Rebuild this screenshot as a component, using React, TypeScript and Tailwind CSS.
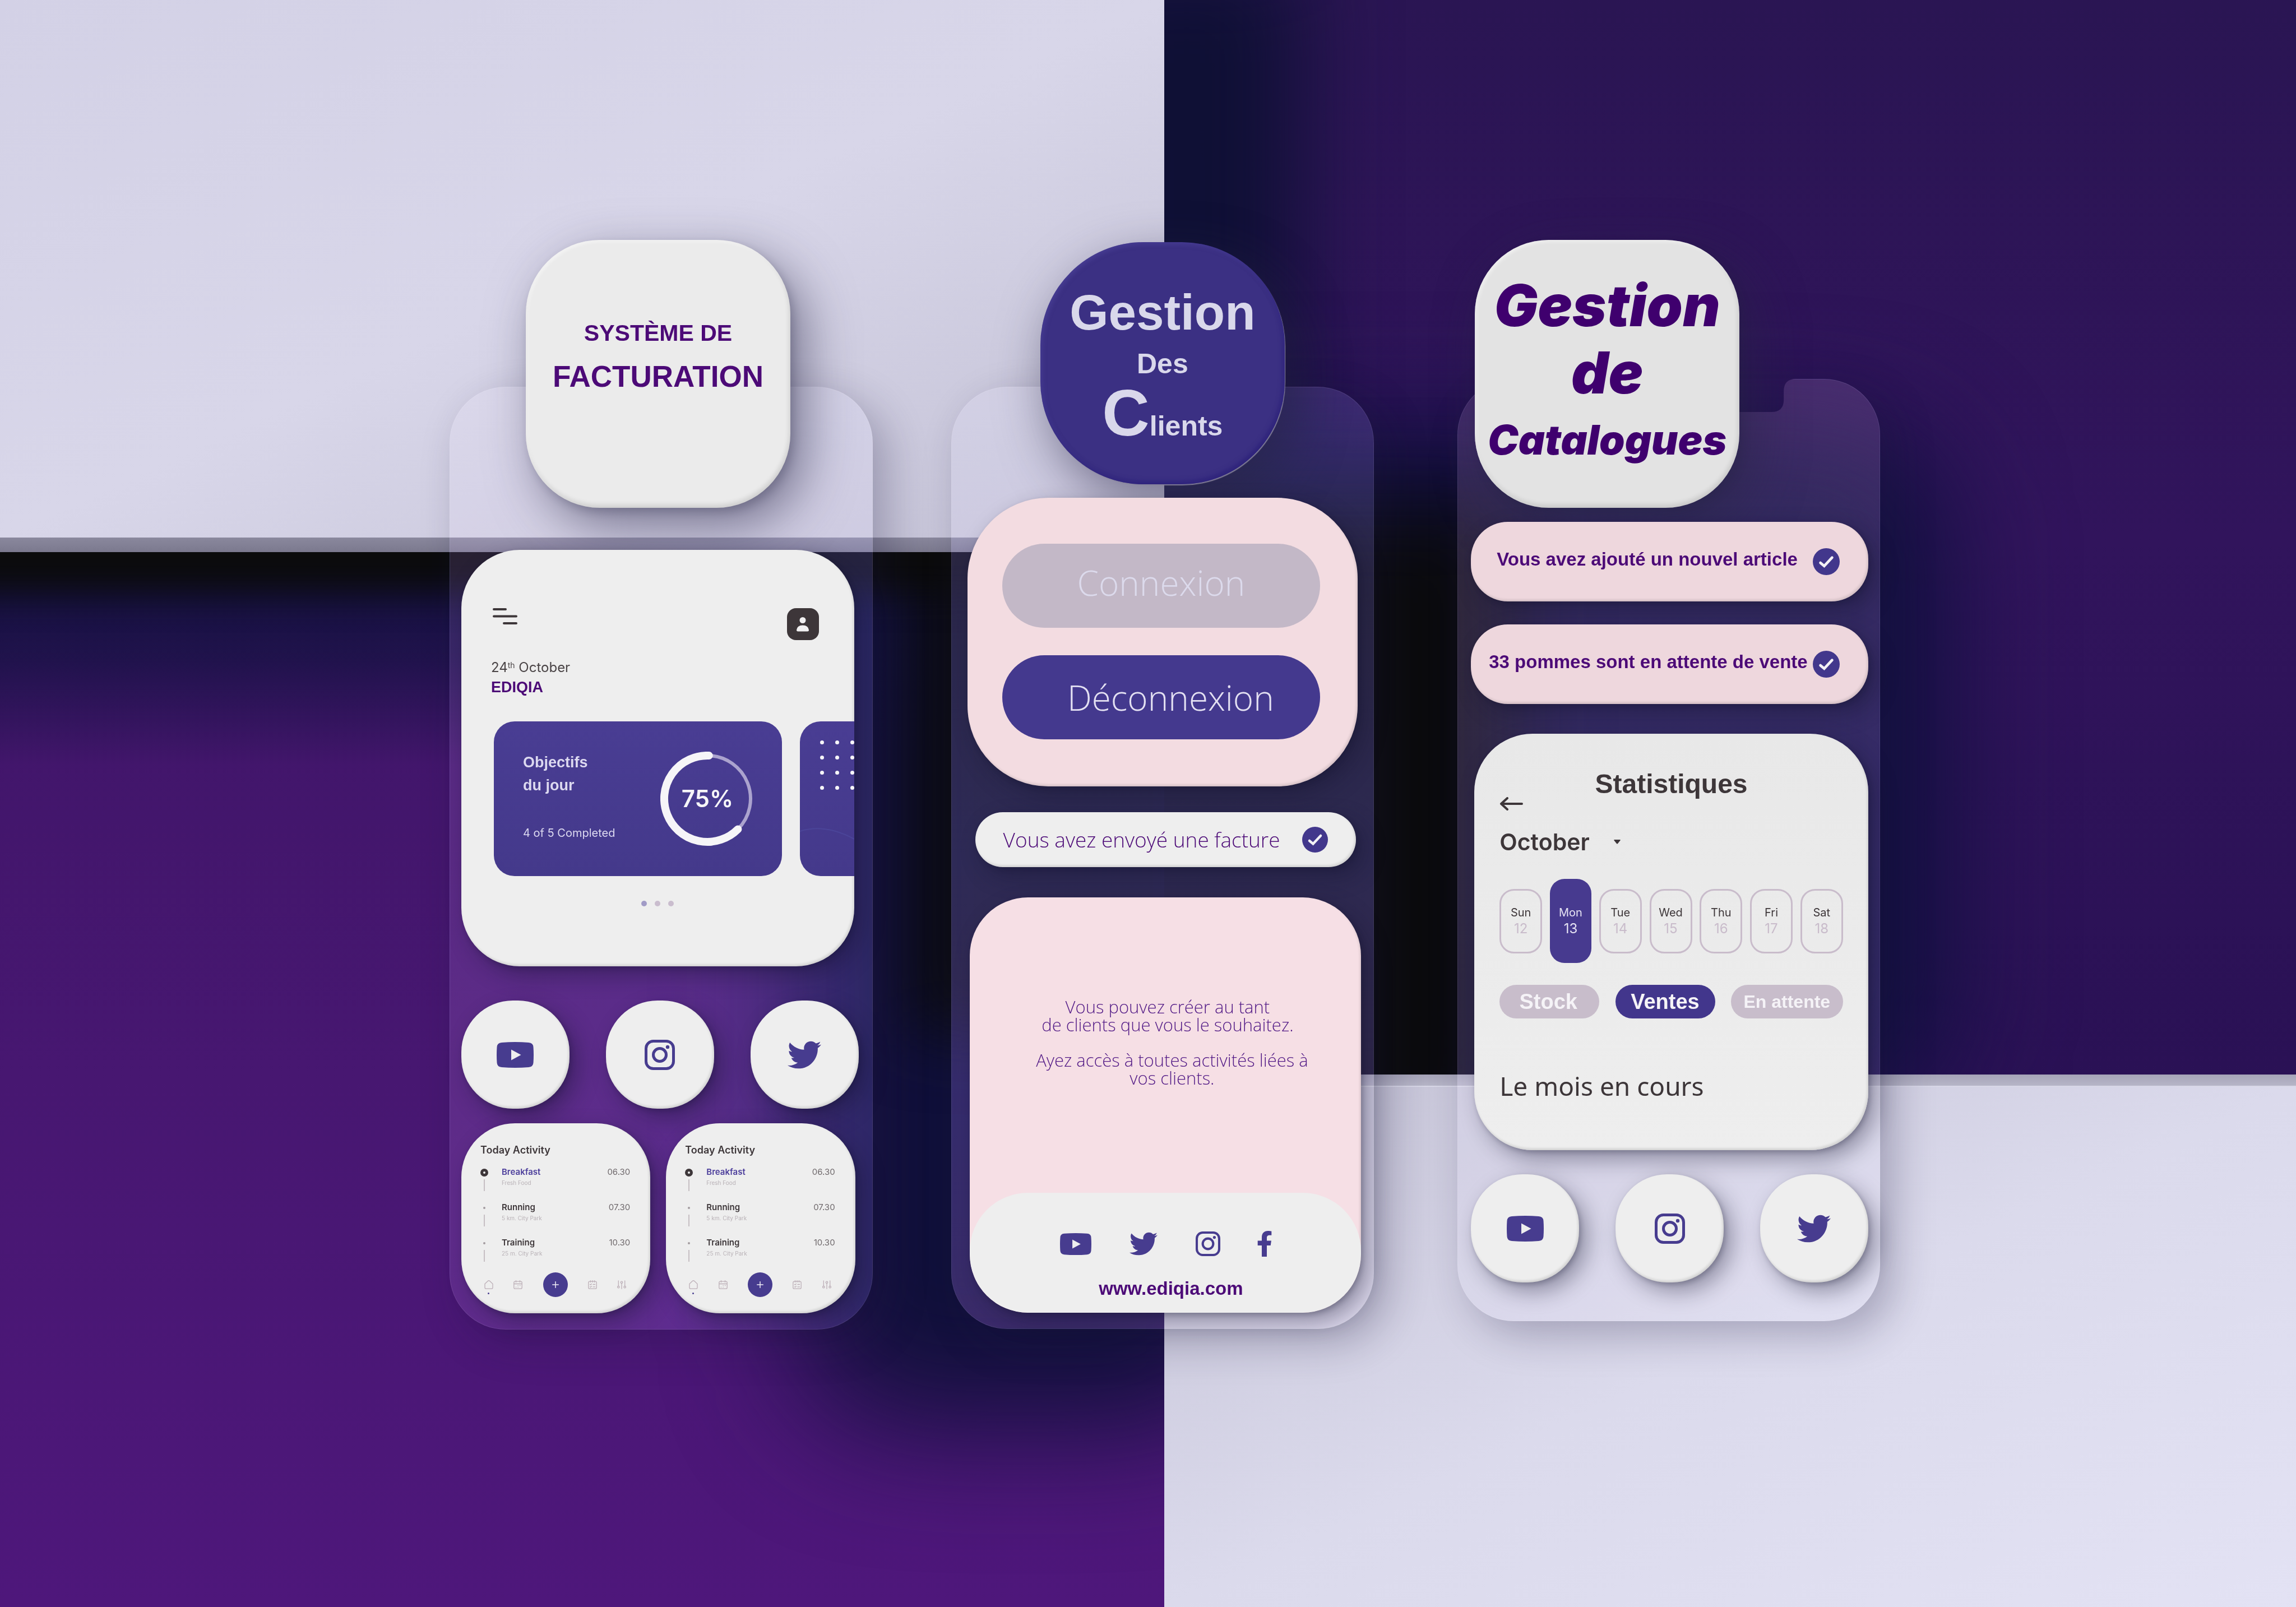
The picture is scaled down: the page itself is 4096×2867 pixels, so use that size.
import React from "react";
import { FaTwitter, FaFacebookF } from "react-icons/fa";

/* ---------- icons ---------- */

function YoutubeIcon({ className }: { className: string }) {
  return (
    <svg viewBox="0 0 66 46" className={className} fill="currentColor" aria-hidden="true">
      <path
        fillRule="evenodd"
        d="M9 1Q33-1 57 1Q65 1.500 65.500 9Q66.500 23 65.500 37Q65 44.500 57 45Q33 47 9 45Q1 44.500.5 37Q-.5 23 .5 9Q1 1.500 9 1ZM26 13.500V32.500L43.500 23Z"
      />
    </svg>
  );
}

function InstagramIcon({ className }: { className: string }) {
  return (
    <svg viewBox="0 0 54 54" className={className} fill="none" stroke="currentColor" strokeWidth="5" aria-hidden="true">
      <rect x="2.500" y="2.500" width="49" height="49" rx="13" />
      <circle cx="27" cy="27" r="11.500" />
      <circle cx="41" cy="13" r="3.200" fill="currentColor" stroke="none" />
    </svg>
  );
}

function CheckBadge({ className }: { className: string }) {
  return (
    <svg viewBox="0 0 46 46" className={className} aria-hidden="true">
      <circle cx="23" cy="23" r="23" fill="#42378c" />
      <path d="M13 25L19.500 30.500L33 16" fill="none" stroke="#f3f1f6" strokeWidth="4.500" strokeLinecap="round" />
    </svg>
  );
}

function NavIcon({ children }: { children: React.ReactNode }) {
  return (
    <svg
      viewBox="0 0 16 16"
      className="size-4"
      fill="none"
      stroke="#bdb0b8"
      strokeWidth="1.300"
      strokeLinecap="round"
      strokeLinejoin="round"
      aria-hidden="true"
    >
      {children}
    </svg>
  );
}

/* ---------- shared pieces ---------- */

const tileShadow =
  "shadow-[24px_32px_90px_rgba(40,38,70,0.55),6px_8px_16px_rgba(30,28,60,0.2),inset_-2px_-5px_8px_rgba(0,0,0,0.12),inset_3px_3px_6px_rgba(255,255,255,0.5)]";
const cardShadow =
  "shadow-[14px_16px_38px_rgba(18,18,45,0.38),3px_4px_8px_rgba(18,18,45,0.22),inset_-2px_-3px_4px_rgba(0,0,0,0.12)]";
const panel =
  "relative min-w-0 flex-1 self-start rounded-[100px] shadow-[24px_24px_72px_rgba(30,26,60,0.28)]";
const glass = "absolute inset-0 -z-10 rounded-[100px] border border-[#55506a]/40 mix-blend-screen";

function SocialLinks() {
  const item =
    "flex size-[193px] items-center justify-center rounded-[92px] bg-[#eeeeee] text-[#473c8f] " + cardShadow;
  return (
    <nav className="flex justify-between" aria-label="Réseaux sociaux">
      <a href="#youtube" aria-label="YouTube" className={item}>
        <YoutubeIcon className="h-[46px] w-[66px]" />
      </a>
      <a href="#instagram" aria-label="Instagram" className={item}>
        <InstagramIcon className="size-[54px]" />
      </a>
      <a href="#twitter" aria-label="Twitter" className={item}>
        <FaTwitter className="size-[60px]" />
      </a>
    </nav>
  );
}

const activities = [
  { name: "Breakfast", place: "Fresh Food", time: "06.30", current: true },
  { name: "Running", place: "5 km. City Park", time: "07.30", current: false },
  { name: "Training", place: "25 m. City Park", time: "10.30", current: false },
];

function ActivityCard() {
  return (
    <article
      className={"min-h-[339px] min-w-0 flex-1 rounded-[96px] bg-[#eeeeee] pt-9 pr-9 pl-[34px] font-[Inter,sans-serif] " + cardShadow}
    >
      <h3 className="text-[18px] leading-6 font-semibold text-[#3d3639]">Today Activity</h3>
      <ul className="mt-[17px]">
        {activities.map((a) => (
          <li key={a.name} className="flex h-[63px]">
            <div className="mt-1 mr-6 flex w-3.5 flex-col items-center">
              <span className="flex h-3.5 items-center">
                {a.current ? (
                  <span className="size-3.5 rounded-full border-[5px] border-[#3d3639]" />
                ) : (
                  <span className="size-1 rounded-full bg-[#a39ca0]" />
                )}
              </span>
              <span className="mt-[5px] h-[21px] w-0.5 bg-[#c6bfc3]" />
            </div>
            <div className="flex-1">
              <p
                className={
                  a.current
                    ? "text-[15px] leading-5 font-semibold text-[#4b3d9b]"
                    : "text-[15px] leading-5 font-semibold text-[#3d3639]"
                }
              >
                {a.name}
              </p>
              <p className="mt-0.5 text-[10px] leading-[14px] text-[#b9b2b7]">{a.place}</p>
            </div>
            <time className="text-[15px] leading-5 text-[#6f696c]">{a.time}</time>
          </li>
        ))}
      </ul>
      <nav className="mx-[7px] flex items-center justify-between" aria-label="Activité">
        <button type="button" aria-label="Accueil" className="relative">
          <NavIcon>
            <path d="M1 6.500L6.500 1.300Q8 .2 9.500 1.300L15 6.500V13Q15 15.200 12.800 15.200H3.200Q1 15.200 1 13Z" />
          </NavIcon>
          <span className="absolute top-[22px] left-1.5 size-[3px] rounded-full bg-[#473c8f]" />
        </button>
        <button type="button" aria-label="Calendrier">
          <NavIcon>
            <path d="M3 2.200H13Q15.200 2.200 15.200 4.400V13Q15.200 15.200 13 15.200H3Q.8 15.200 .8 13V4.400Q.8 2.200 3 2.200ZM.8 6.500H15.200M4.500 .7V3.500M11.500 .7V3.500M11.500 9.500H12M8 9.500H8.300M8 12.300H8.300M4.300 12.300H4.600" />
          </NavIcon>
        </button>
        <button
          type="button"
          aria-label="Ajouter"
          className="flex size-11 items-center justify-center rounded-full bg-[#473c8f]"
        >
          <svg viewBox="0 0 12 12" className="size-3" stroke="#efedf6" strokeWidth="1.500" strokeLinecap="round" aria-hidden="true">
            <path d="M6 .7V11.300M.7 6H11.300" />
          </svg>
        </button>
        <button type="button" aria-label="Tâches">
          <NavIcon>
            <path d="M3 2.200H13Q15.200 2.200 15.200 4.400V13Q15.200 15.200 13 15.200H3Q.8 15.200 .8 13V4.400Q.8 2.200 3 2.200ZM4.500 .7V3.500M8 .7V3.500M11.500 .7V3.500M3.500 7.500L4.500 8.300L6.300 6.500M9 7.500H12.500M3.500 11.800L4.500 12.600L6.300 10.800M9 11.800H12.500" />
          </NavIcon>
        </button>
        <button type="button" aria-label="Réglages">
          <NavIcon>
            <path d="M2.300 1V10M13.700 1V10M8 15.200V6" />
            <circle cx="2.300" cy="12.200" r="1.700" />
            <circle cx="13.700" cy="12.200" r="1.700" />
            <circle cx="8" cy="3.800" r="1.700" />
          </NavIcon>
        </button>
      </nav>
    </article>
  );
}

function ProgressRing() {
  return (
    <div className="relative size-[168px]">
      <svg viewBox="0 0 168 168" className="size-full" fill="none" strokeLinecap="round" aria-hidden="true">
        <path d="M86.700 7A77 77 0 0 1 138.400 138.400" stroke="#aba3ce" strokeWidth="6" />
        <path d="M138.400 138.400A77 77 0 1 1 86.700 7" stroke="#f6f5f8" strokeWidth="14" />
      </svg>
      <span className="absolute inset-0 flex items-center justify-center font-[Inter,sans-serif] text-[42px] leading-none font-semibold text-[#f6f5f8]">
        75%
      </span>
    </div>
  );
}

/* ---------- columns ---------- */

function BillingColumn() {
  return (
    <section className={"mt-[262px] mr-[140px] pr-[25px] pb-[29px] pl-[21px] " + panel}>
      <div className={"bg-linear-to-r from-[#1e1628] to-[#1b1936] " + glass} />
      <header
        className={
          "-mt-[262px] ml-[115px] flex min-h-[478px] w-[472px] flex-col items-center rounded-[132px] bg-[#ebebeb] pt-[136px] font-['Liberation_Sans',sans-serif] font-bold text-[#4c0a77] " +
          tileShadow
        }
      >
        <h2 className="text-center">
          <span className="block text-[41px] leading-[60px]">SYSTÈME DE</span>
          <span className="mt-2 block text-[53px] leading-[80px]">FACTURATION</span>
        </h2>
      </header>

      <article className={"mt-[75px] mr-2 min-h-[743px] overflow-hidden rounded-[104px] bg-[#eeeeee] pt-[104px] " + cardShadow}>
        <div className="flex justify-between pr-[63px] pl-14">
          <button type="button" aria-label="Menu" className="self-start">
            <svg viewBox="0 0 44 29" className="h-[29px] w-11" stroke="#3d3639" strokeWidth="4" strokeLinecap="round" aria-hidden="true">
              <path d="M2 2H23M2 14.500H42M20 27H42" />
            </svg>
          </button>
          <button
            type="button"
            aria-label="Profil"
            className="flex size-[57px] items-center justify-center rounded-[16px] bg-[#3d3639]"
          >
            <svg viewBox="0 0 22 26" className="h-[26px] w-[22px]" fill="#f1f0f1" aria-hidden="true">
              <circle cx="11" cy="5.500" r="5.500" />
              <path d="M0 23Q1 14.500 11 14.500T22 23Q22 25.500 19.500 25.500H2.500Q0 25.500 0 23Z" />
            </svg>
          </button>
        </div>
        <p className="mt-[35px] pl-[53px] font-[Inter,sans-serif] text-[24px] leading-7 text-[#4a4446]">
          24<sup className="text-[14px]">th</sup> October
        </p>
        <p className="mt-[3px] pl-[53px] font-['Liberation_Sans',sans-serif] text-[27px] leading-9 font-bold text-[#4c0a77]">EDIQIA</p>

        <div className="mt-[43px] flex gap-8 pl-[58px]">
          <div className="flex min-h-[276px] w-[514px] shrink-0 items-center justify-between rounded-[37px] bg-linear-to-b from-[#493d93] to-[#44398b] pr-[49px] pl-[52px]">
            <div className="self-start pt-[53px]">
              <p className="font-['Liberation_Sans',sans-serif] text-[27px] leading-[41px] font-bold text-[#dcd9f0]">
                Objectifs
                <br />
                du jour
              </p>
              <p className="mt-[50px] font-[Inter,sans-serif] text-[20px] leading-7 text-[#dcd9f0]">4 of 5 Completed</p>
            </div>
            <ProgressRing />
          </div>
          <div className="relative min-h-[276px] min-w-0 flex-1 overflow-hidden rounded-l-[37px] bg-linear-to-b from-[#493d93] to-[#44398b] pt-[34px] pl-9">
            <div className="grid w-[61px] grid-cols-[repeat(3,7px)] gap-5">
              {Array.from({ length: 12 }, (_, i) => (
                <span key={i} className="size-[7px] rounded-full bg-[#f6f5f8]" />
              ))}
            </div>
            <svg viewBox="0 0 97 86" className="absolute bottom-0 left-0 h-[86px] w-[97px]" aria-hidden="true">
              <path d="M0 6Q45-8 97 20" fill="none" stroke="#4b4599" strokeWidth="2" />
            </svg>
          </div>
        </div>

        <div className="mt-11 flex justify-center gap-3.5">
          <button type="button" aria-label="Page 1" className="size-2.5 rounded-full bg-[#a19bc6]" />
          <button type="button" aria-label="Page 2" className="size-2.5 rounded-full bg-[#cabdce]" />
          <button type="button" aria-label="Page 3" className="size-2.5 rounded-full bg-[#cabdce]" />
        </div>
      </article>

      <div className="mt-[61px]">
        <SocialLinks />
      </div>

      <div className="mt-[26px] mr-1.5 flex gap-7">
        <ActivityCard />
        <ActivityCard />
      </div>
    </section>
  );
}

function ClientsColumn() {
  return (
    <section className={"mt-[262px] mr-[149px] px-[23px] pb-[29px] " + panel}>
      <div className={"bg-linear-to-b from-[#1d1a30] via-[#241f48] to-[#2c1d3c] " + glass} />
      <header className="mx-auto -mt-[258px] flex min-h-[432px] w-[436px] flex-col items-center rounded-[184px] bg-[#3b3083] pt-[77px] font-['Liberation_Sans',sans-serif] font-bold text-[#d9d8eb] shadow-[16px_32px_90px_rgba(40,38,70,0.55),1px_2px_1px_rgba(200,195,215,0.9),inset_-3px_-5px_8px_rgba(40,28,120,0.7),inset_3px_3px_8px_rgba(90,80,170,0.5)]">
        <h2 className="text-center">
          <span className="block text-[89px] leading-[96px]">Gestion</span>
          <span className="mt-3.5 block text-[50px] leading-[60px]">Des</span>
          <span className="block text-[50px] leading-[116px]">
            <span className="text-[117px] leading-[116px]">C</span>lients
          </span>
        </h2>
      </header>

      <article
        className={"mx-1.5 mt-6 rounded-[144px] bg-[#f3dce1] pt-[82px] pr-[67px] pb-[84px] pl-[62px] font-['Open_Sans',sans-serif] font-light " + cardShadow}
      >
        <button type="button" className="flex h-[150px] w-full items-center justify-center rounded-full bg-[#c3b8c7] pb-3 text-[62px] text-[#dcdaec]">
          Connexion
        </button>
        <button type="button" className="mt-[49px] flex h-[150px] w-full items-center justify-center rounded-full bg-[#44398e] pl-[34px] text-[62px] text-[#e3e0f2]">
          Déconnexion
        </button>
      </article>

      <div
        className={"mt-[46px] mr-[9px] ml-5 flex min-h-[98px] items-center justify-between rounded-full bg-[#eeeeee] px-[50px] font-['Open_Sans',sans-serif] text-[37px] font-light text-[#4c0a77] " + cardShadow}
        role="status"
      >
        <span className="whitespace-nowrap">Vous avez envoyé une facture</span>
        <CheckBadge className="size-[46px] shrink-0" />
      </div>

      <article
        className={"mt-[54px] ml-2.5 flex min-h-[741px] flex-col justify-between overflow-hidden rounded-[104px] bg-[#f6dfe5] pt-[179px] " + cardShadow}
      >
        <div className="text-center font-['Open_Sans',sans-serif] text-[31px] leading-8 font-light text-[#521a86]">
          <p className="pl-2">
            Vous pouvez créer au tant
            <br />
            de clients que vous le souhaitez.
          </p>
          <p className="mt-[31px] pl-6">
            Ayez accès à toutes activités liées à
            <br />
            vos clients.
          </p>
        </div>
        <footer className="min-h-[214px] rounded-[104px] bg-[#eeeeee] pt-[68px] text-[#473c8f]">
          <nav className="flex h-[46px] items-center justify-center gap-[68px]" aria-label="Suivez-nous">
            <a href="#youtube" aria-label="YouTube">
              <YoutubeIcon className="h-[39px] w-14" />
            </a>
            <a href="#twitter" aria-label="Twitter">
              <FaTwitter className="size-[50px]" />
            </a>
            <a href="#instagram" aria-label="Instagram">
              <InstagramIcon className="size-11" />
            </a>
            <a href="#facebook" aria-label="Facebook" className="flex w-[22px] justify-center">
              <FaFacebookF className="size-[46px] shrink-0" />
            </a>
          </nav>
          <p className="mt-[37px] pl-5 text-center font-['Liberation_Sans',sans-serif] text-[33px] leading-10 font-bold text-[#4c0a77]">
            <a href="#ediqia">www.ediqia.com</a>
          </p>
        </footer>
      </article>
    </section>
  );
}

const days = [
  ["Sun", "12"],
  ["Mon", "13"],
  ["Tue", "14"],
  ["Wed", "15"],
  ["Thu", "16"],
  ["Fri", "17"],
  ["Sat", "18"],
];

function Alert({ text, inset }: { text: string; inset: string }) {
  return (
    <div
      role="status"
      className={"flex min-h-[142px] items-center justify-between rounded-[66px] bg-[#eed7dd] pr-[51px] font-['Liberation_Sans',sans-serif] text-[33px] font-bold text-[#4c0a77] " + inset + " " + cardShadow}
    >
      <span className="pb-2 whitespace-nowrap">{text}</span>
      <CheckBadge className="size-12 shrink-0" />
    </div>
  );
}

function CatalogueColumn() {
  return (
    <section className="relative mt-[248px] min-w-0 flex-1 self-start pr-[21px] pb-[69px] pl-6">
      {/* glass plate with the recess beside the title tile */}
      <div className="absolute inset-0 -z-10 rounded-[100px] shadow-[24px_24px_72px_rgba(30,26,60,0.28)]" />
      <div
        className={
          "[clip-path:path(evenodd,'M-200_-200H1200V2000H-200ZM120_-10V59H560Q582_59_582_37V22Q582_0_604_0V-10Z')] bg-linear-to-b from-[#241b26] via-[#251d34] to-[#1e1a30] " +
          glass
        }
      />
      <header
        className={
          "-mt-[248px] ml-[7px] flex min-h-[478px] w-[472px] flex-col items-center rounded-[132px] bg-[#e3e3e3] pt-[62px] font-[Inter,sans-serif] font-black text-[#3f006e] italic " +
          tileShadow
        }
      >
        <h2 className="text-center">
          <span className="block text-[103px] leading-[110px]">Gestion</span>
          <span className="mt-[5px] block text-[103px] leading-[120px]">de</span>
          <span className="mt-[10px] block text-[73px] leading-[100px]">Catalogues</span>
        </h2>
      </header>

      <div className="mt-[25px] flex flex-col gap-[41px]">
        <Alert text="Vous avez ajouté un nouvel article" inset="pl-[46px]" />
        <Alert text="33 pommes sont en attente de vente" inset="pl-8" />
      </div>

      <article className={"mt-[53px] ml-1.5 min-h-[743px] rounded-[104px] bg-linear-to-b from-[#e8e8e8] to-[#eeeeee] px-[45px] pt-[67px] text-[#3d3639] " + cardShadow}>
        <h2 className="text-center font-['Liberation_Sans',sans-serif] text-[48px] leading-[46px] font-bold">Statistiques</h2>
        <button type="button" aria-label="Retour" className="block">
          <svg viewBox="0 0 42 24" className="h-6 w-[42px]" fill="none" stroke="#3d3639" strokeWidth="4" strokeLinecap="round" strokeLinejoin="round" aria-hidden="true">
            <path d="M40 12H3M14 2L3 12L14 22" />
          </svg>
        </button>
        <label className="relative mt-8 block w-[216px] font-[Inter,sans-serif]">
          <span className="sr-only">Mois</span>
          <select className="block h-12 w-full appearance-none bg-transparent p-0 text-[41px] leading-[48px] font-semibold outline-none">
            <option>October</option>
          </select>
          <svg viewBox="0 0 12 8" className="pointer-events-none absolute top-5 right-0 h-2 w-3" fill="#3d3639" aria-hidden="true">
            <path d="M1 0H11Q12.500.5 11 2L7 7Q6 8 5 7L1 2Q-.5.5 1 0Z" />
          </svg>
        </label>

        <div className="mt-[42px] flex items-center justify-between font-[Inter,sans-serif]">
          {days.map(([day, date]) =>
            day === "Mon" ? (
              <button
                key={day}
                type="button"
                aria-pressed="true"
                className="flex h-[150px] w-[74px] flex-col items-center justify-center rounded-[26px] bg-[#473a8f] text-[#e6e3f3]"
              >
                <span className="text-[20px] leading-7">{day}</span>
                <span className="text-[24px] leading-[30px]">{date}</span>
              </button>
            ) : (
              <button
                key={day}
                type="button"
                className="flex h-[115px] w-[76px] flex-col items-center justify-center rounded-[26px] border-[3px] border-[#c9bccb]"
              >
                <span className="text-[20px] leading-7">{day}</span>
                <span className="text-[24px] leading-[30px] text-[#c9bccb]">{date}</span>
              </button>
            ),
          )}
        </div>

        <div className="mt-[39px] flex justify-between font-['Liberation_Sans',sans-serif] font-bold text-[#f5f3f7]">
          <button type="button" className="h-[60px] w-[178px] rounded-full bg-[#c8bdcb] pr-1 text-[38px] leading-[60px]">
            Stock
          </button>
          <button type="button" aria-pressed="true" className="h-[60px] w-[178px] rounded-full bg-[#42368c] text-[38px] leading-[60px]">
            Ventes
          </button>
          <button type="button" className="h-[60px] w-[200px] rounded-full bg-[#c8bdcb] text-[32px] leading-[60px]">
            En attente
          </button>
        </div>

        <p className="mt-[92px] font-['Noto_Sans',sans-serif] text-[46px] leading-[56px]">Le mois en cours</p>
      </article>

      <div className="mt-[43px]">
        <SocialLinks />
      </div>
    </section>
  );
}

/* ---------- backdrop: four overlapping slabs with soft shade ---------- */

function Backdrop() {
  return (
    <div className="absolute inset-0 -z-20 flex overflow-hidden" aria-hidden="true">
      <div className="flex w-[50.72%] flex-col">
        <div className="h-[33.45%] bg-linear-to-br from-[#d3d1e6] via-[#d8d6e9] to-[#c3c1d5]" />
        <div className="h-[26px] bg-linear-to-b from-[#8a889d] to-[#7b798e]" />
        <div className="relative flex-1 overflow-hidden bg-linear-to-b from-[#3f1568] via-[#471771] to-[#4e177b]">
          <div className="absolute -top-20 -right-40 h-[1640px] w-[820px] rounded-[200px] bg-[#10103a] blur-[110px]" />
          <div className="absolute top-0 right-0 left-0 h-[380px] bg-linear-to-b from-[#10103a] via-[#12113f]/70 to-[#12113f]/0" />
          <div className="absolute -top-20 right-[-100px] h-[940px] w-[560px] bg-[#0c0c12] blur-[60px]" />
          <div className="absolute -top-32 -right-40 -left-40 h-[200px] bg-[#0b0b0c] blur-[30px]" />
        </div>
      </div>
      <div className="flex flex-1 flex-col">
        <div className="relative h-[66.85%] overflow-hidden bg-linear-to-b from-[#2a1553] via-[#31145c] to-[#2a1155]">
          <div className="absolute -top-20 -bottom-20 -left-40 w-[400px] bg-[#0f1035] blur-[80px]" />
          <div className="absolute top-[760px] -bottom-20 -left-40 w-[1560px] rounded-[200px] bg-[#11103f] blur-[100px]" />
          <div className="absolute top-[900px] -bottom-40 -left-40 w-[780px] bg-[#0b0b0d] blur-[80px]" />
        </div>
        <div className="h-[22px] border-b-2 border-[#d8d7e7] bg-linear-to-b from-[#a6a4b8] to-[#b6b5c7]" />
        <div className="flex-1 bg-linear-to-br from-[#c4c2d5] via-[#dbdaec] to-[#e3e2f4]" />
      </div>
    </div>
  );
}

export default function App() {
  return (
    <main className="relative isolate flex min-h-screen w-full overflow-hidden pt-[428px] pr-[18.12%] pl-[19.58%]">
      <Backdrop />
      <BillingColumn />
      <ClientsColumn />
      <CatalogueColumn />
    </main>
  );
}
